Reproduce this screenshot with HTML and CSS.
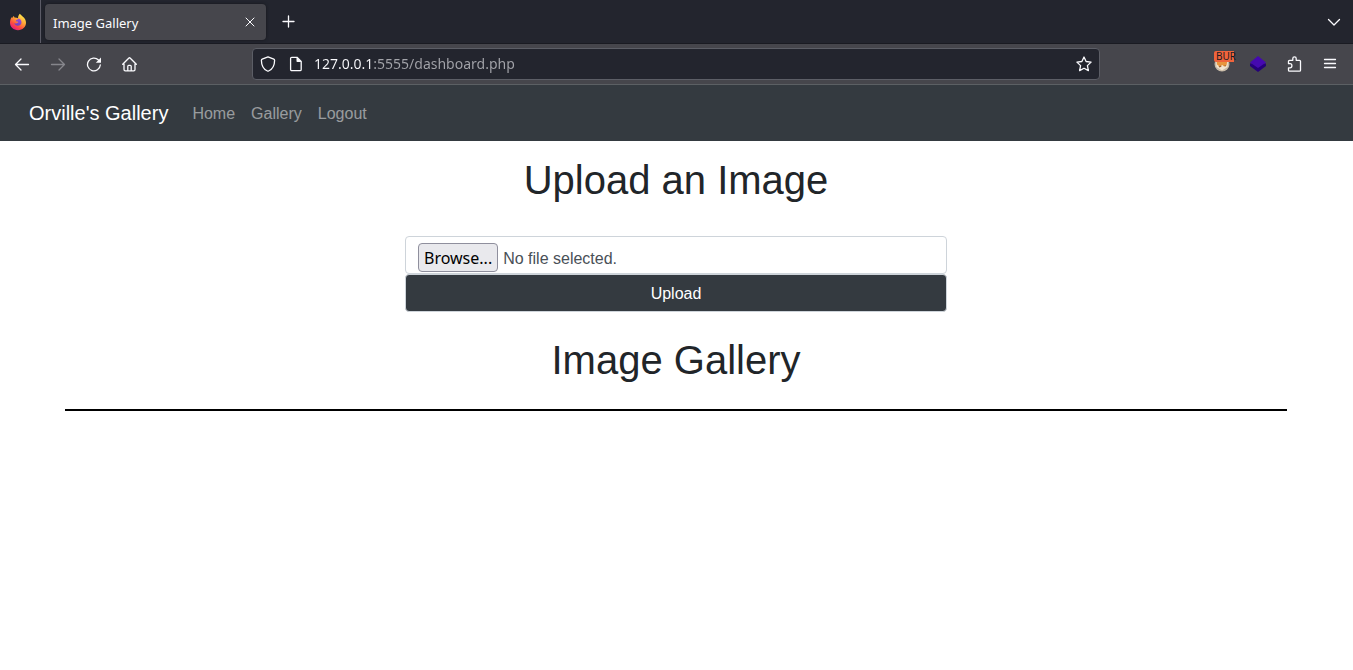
FILE: index.html
```html
<!DOCTYPE html>
<html lang="en">
<head>
<meta charset="utf-8">
<meta name="viewport" content="width=device-width, initial-scale=1">
<title>Image Gallery</title>
<link rel="stylesheet" href="styles.css">
</head>
<body>
<header class="browser">
  <div class="tabstrip">
    <div class="brand-slot">
      <svg width="18" height="18" viewBox="0 0 18 18" aria-hidden="true">
        <defs>
          <linearGradient id="flame" x1="0.85" y1="0.05" x2="0.25" y2="1">
            <stop offset="0" stop-color="#fff44f"/><stop offset="0.4" stop-color="#ffa436"/><stop offset="0.7" stop-color="#ff4f3e"/><stop offset="1" stop-color="#e31587"/>
          </linearGradient>
          <linearGradient id="globe" x1="0.7" y1="0" x2="0.3" y2="1">
            <stop offset="0" stop-color="#a04bd8"/><stop offset="1" stop-color="#6a3fc4"/>
          </linearGradient>
        </defs>
        <path fill="url(#flame)" d="M10.800.8c1 1.200 2 1.800 2.800 2.800C15.800 5 17 7.400 17 9.800c0 4.300-3.600 7.400-8 7.400S1 14 1 9.800c0-2.300.6-4.300 1.800-5.900L3 5.200C3.600 4 4.300 3.300 5 2.900c0 .7.200 1.300.6 1.700 1.500 0 2.600.2 3.400.7 0-1.800.7-3.400 1.800-4.500z"/>
        <path fill="url(#globe)" d="M9.500 5.500c1.800.4 3 1.900 3 3.700 0 2.100-1.600 3.600-3.700 3.600-1.800 0-3.200-1.100-3.600-2.700.8.600 1.900.6 2.600.1.600-.4 1.200-.5 1.600-.9-.4-.9-1.500-.7-2.300-1.100-.4-.4-.2-.9.400-1.300L9 6.200z"/>
      </svg>
    </div>
    <div class="tab">
      <span class="tab-title">Image Gallery</span>
      <button class="icon-btn tab-close" aria-label="Close tab">
        <svg width="10" height="10" viewBox="0 0 10 10"><path class="line thin" d="M1 1l8 8M9 1L1 9"/></svg>
      </button>
    </div>
    <button class="icon-btn new-tab" aria-label="New tab">
      <svg width="13" height="13" viewBox="0 0 13 13"><path class="line" d="M6.500 1v11M1 6.500h11"/></svg>
    </button>
    <button class="icon-btn all-tabs" aria-label="List all tabs">
      <svg width="14" height="14" viewBox="0 0 14 14"><path class="line" d="M1.500 4.500L7 10l5.500-5.500"/></svg>
    </button>
  </div>
  <div class="toolbar">
    <div class="tools">
      <button class="icon-btn" aria-label="Back">
        <svg width="16" height="16" viewBox="0 0 16 16"><path class="line" d="M14.500 8.500H1.500M7 3L1.500 8.500 7 14"/></svg>
      </button>
      <button class="icon-btn" aria-label="Forward" disabled>
        <svg width="16" height="16" viewBox="0 0 16 16"><path class="line" d="M1.500 8.500h13M9 3l5.500 5.500L9 14"/></svg>
      </button>
      <button class="icon-btn" aria-label="Reload">
        <svg width="16" height="16" viewBox="0 0 16 16"><path class="line" d="M14.300 9A6.400 6.400 0 1 1 12.500 4"/><path fill="currentColor" d="M15 1.500v5.200H9.800z"/></svg>
      </button>
      <button class="icon-btn" aria-label="Home">
        <svg width="16" height="16" viewBox="0 0 16 16"><path class="line" d="M.7 8.200l6-6c.5-.5 1.100-.5 1.600 0l6 6M2 7v6.500c0 .8.500 1.300 1.300 1.300h8.400c.8 0 1.300-.5 1.300-1.300V7M5.800 14.800v-4.600c0-.6.300-.9.900-.9h1.600c.6 0 .9.300.9.900v4.600"/></svg>
      </button>
    </div>
    <div class="urlbar">
      <svg width="16" height="16" viewBox="0 0 16 16" aria-hidden="true"><path class="line" d="M8 .8l5.800 2.300c.5.200.8.600.8 1.100 0 5-1.600 8.700-6 10.800-.4.200-.8.200-1.200 0-4.400-2.100-6-5.800-6-10.800 0-.5.300-.9.800-1.100z"/></svg>
      <svg width="16" height="16" viewBox="0 0 16 16" aria-hidden="true"><path class="line" d="M3.800 1.300H9l4.200 4.200v8c0 .7-.5 1.200-1.200 1.200H3.800c-.7 0-1.200-.5-1.200-1.200v-11c0-.7.500-1.200 1.200-1.200z"/><path fill="currentColor" d="M8.500 1l5 5H9.300c-.5 0-.8-.3-.8-.8z"/></svg>
      <input class="url" type="text" aria-label="Address" value="127.0.0.1:5555/dashboard.php">
      <button class="icon-btn star" aria-label="Bookmark this page">
        <svg width="16" height="16" viewBox="0 0 16 16"><path class="line" d="M8 1l2.100 4.500 5 .6-3.700 3.500 1 5L8 12.200l-4.400 2.400 1-5L.9 6.100l5-.6z"/></svg>
      </button>
    </div>
    <div class="tools tools-end">
      <button class="icon-btn proxy" aria-label="Proxy extension">
        <svg width="18" height="18" viewBox="0 0 18 18"><circle cx="9" cy="9" r="7.500" fill="#c9bba8"/><path fill="#f3e5d0" d="M3 6h12l-.5 6L9 15.500 3.500 12z"/><path fill="#e8953d" d="M3.500 5h11l-1 5.500-2.500 1-1.500-1.500-3 1.500-2.500-2z"/><path fill="#9b592b" d="M5.500 11.500l2.500-1 .5 1-2 1zM11 11l1.500-1 .5 1.500z"/></svg>
        <span class="badge">BUR</span>
      </button>
      <button class="icon-btn" aria-label="Layers extension">
        <svg width="16" height="16" viewBox="0 0 16 16"><path fill="#25007a" d="M0 7.500h16V10l-8 6-8-6z"/><path fill="#4509b0" d="M8 0l8 6.500L8 12 0 6.500z"/></svg>
      </button>
      <button class="icon-btn" aria-label="Extensions">
        <svg width="16" height="16" viewBox="0 0 16 16"><path class="line" d="M2.500 7.700V5.300c0-.6.400-1 1-1h3.300V2.600C6.800 1.500 7.500.8 8.500.8s1.700.7 1.700 1.800v1.700h3.300c.6 0 1 .4 1 1v8.900c0 .6-.4 1-1 1h-10c-.6 0-1-.4-1-1v-2.400H4c1.100 0 1.900-.7 1.900-2.100S5.100 7.700 4 7.700z"/></svg>
      </button>
      <button class="icon-btn" aria-label="Open menu">
        <svg width="16" height="16" viewBox="0 0 16 16"><path class="line" d="M2.500 3.500h11M2.500 7.500h11M2.500 11.500h11"/></svg>
      </button>
    </div>
  </div>
</header>
<nav class="navbar">
  <a class="navbar-brand" href="#">Orville's Gallery</a>
  <a class="nav-link" href="#">Home</a>
  <a class="nav-link" href="#gallery">Gallery</a>
  <a class="nav-link" href="#">Logout</a>
</nav>
<main class="content">
  <h1 class="heading">Upload an Image</h1>
  <form class="upload">
    <input class="file-input" type="file" id="image">
    <label class="file-field" for="image"><span class="browse">Browse...</span><span>No file selected.</span></label>
    <button class="submit" type="button">Upload</button>
  </form>
  <h1 class="heading" id="gallery">Image Gallery</h1>
  <hr class="rule">
</main>
</body>
</html>
```
FILE: styles.css
```css
* { box-sizing: border-box; }

body {
  margin: 0;
  background: #fff;
  color: #212529;
  font: 16px/24px "Liberation Sans", Arial, sans-serif;
}

svg { display: block; flex: none; }

.line {
  fill: none;
  stroke: currentColor;
  stroke-width: 1.3;
  stroke-linecap: round;
  stroke-linejoin: round;
}

.thin { stroke-width: 1; }

/* Browser window */
.browser {
  color: #fbfbfe;
  font-family: "Noto Sans", sans-serif;
}

.tabstrip {
  display: flex;
  align-items: center;
  height: 44px;
  background: #23252e;
  border-bottom: 1px solid #1a1b22;
}

.brand-slot {
  display: flex;
  align-items: center;
  align-self: stretch;
  width: 41px;
  padding-left: 9px;
  border-right: 1px solid #5b5b66;
}

.tab {
  display: flex;
  align-items: center;
  justify-content: space-between;
  width: 221px;
  height: 36px;
  margin-left: 4px;
  padding: 0 4px 0 8px;
  border-radius: 4px;
  background: #46464c;
  box-shadow: 0 0 3px #15161c;
}

.tab-title {
  padding-top: 2px;
  font-size: 13px;
  line-height: 20px;
}

.icon-btn {
  display: flex;
  align-items: center;
  justify-content: center;
  width: 36px;
  height: 36px;
  padding: 0;
  border: 0;
  background: none;
  color: inherit;
}

.icon-btn:disabled { color: #86868c; }
.tab-close { width: 24px; height: 24px; }
.new-tab { margin-left: 4px; }
.all-tabs { margin-left: auto; margin-right: 1px; }

.toolbar {
  display: flex;
  align-items: center;
  height: 41px;
  padding: 0 5px 0 4px;
  background: #46464c;
  border-bottom: 1px solid #5c6064;
}

.tools { display: flex; flex: 1; }
.tools-end { justify-content: flex-end; }

.urlbar {
  display: flex;
  align-items: center;
  gap: 12px;
  flex: 0 1 848px;
  height: 32px;
  padding-left: 7px;
  border: 1px solid #5c5e66;
  border-radius: 4px;
  background: #23252e;
}

.url {
  flex: 1;
  min-width: 0;
  height: 24px;
  margin-left: -2px;
  padding: 0 0 1px;
  border: 0;
  outline: 0;
  background: linear-gradient(to right, #fbfbfe 59px, #a3a4aa 59px);
  background-clip: text;
  -webkit-background-clip: text;
  -webkit-text-fill-color: transparent;
  color: #fbfbfe;
  font: 14px/22px "Noto Sans", sans-serif;
}

.star { width: 30px; height: 30px; }

.proxy { position: relative; }

.badge {
  position: absolute;
  top: 5px;
  left: 10px;
  width: 20px;
  height: 11px;
  padding-left: 2px;
  border-radius: 2px 0 0 2px;
  background: #f0643c;
  color: #1c1b22;
  font: 10px/11px "Noto Sans", sans-serif;
  text-align: left;
}

/* Page */
.navbar {
  display: flex;
  align-items: center;
  height: 56px;
  padding: 0 29px;
  background: #343a40;
}

.navbar a { text-decoration: none; }

.navbar-brand {
  margin-right: 16px;
  color: #fff;
  font-size: 20px;
  line-height: 30px;
}

.nav-link {
  padding: 10px 8px 8px;
  color: rgba(255, 255, 255, 0.5);
}

.content { padding: 15px 66px 0 65px; }

.heading {
  margin: 0;
  font-size: 40px;
  font-weight: 400;
  line-height: 48px;
  text-align: center;
}

.upload {
  position: relative;
  width: 542px;
  max-width: 100%;
  margin: 32px auto 24px;
}

.file-input {
  position: absolute;
  width: 1px;
  height: 1px;
  opacity: 0;
}

.file-field {
  display: flex;
  align-items: baseline;
  gap: 5px;
  height: 38px;
  padding: 6px 12px 0;
  border: 1px solid #ced4da;
  border-radius: 4px;
  color: #495057;
}

.browse {
  padding: 2px 5px 1px;
  border: 1px solid #8f8f9d;
  border-radius: 4px;
  background: #e9e9ed;
  color: #000;
  font-family: "Noto Sans", sans-serif;
}

.submit {
  display: block;
  width: 100%;
  height: 38px;
  padding: 2px 12px 0;
  border: 1px solid #ced4da;
  border-radius: 4px;
  background: #343a40;
  color: #fff;
  font: inherit;
}

.rule {
  height: 2px;
  margin: 25px 0;
  border: 0;
  background: #000;
}
```
